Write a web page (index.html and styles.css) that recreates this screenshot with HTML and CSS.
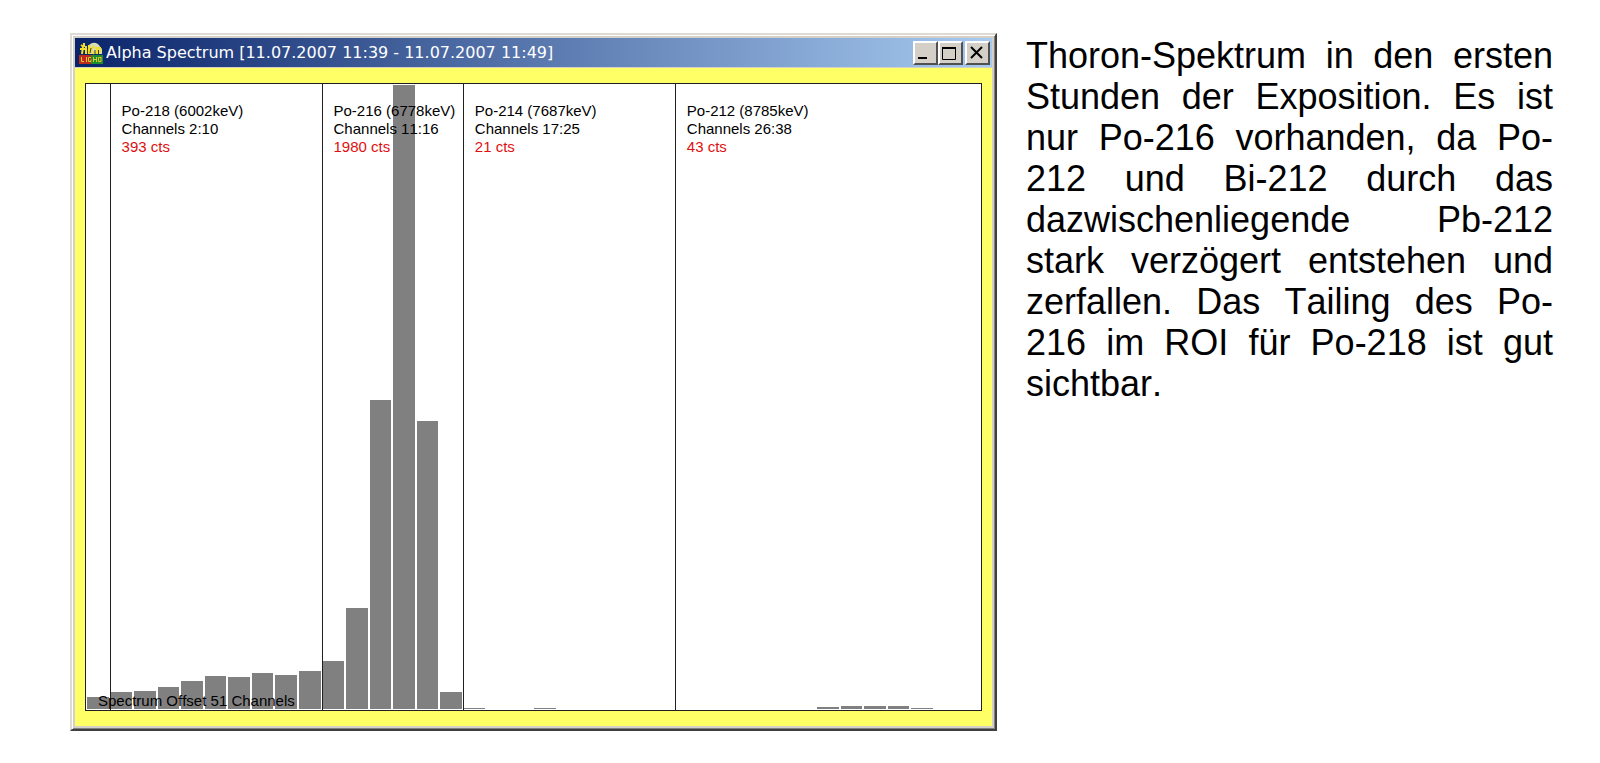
FILE: index.html
```
<!DOCTYPE html>
<html lang="de">
<head>
  <meta charset="UTF-8">
  <meta name="viewport" content="width=device-width, initial-scale=1.0">
  <title>Alpha Spectrum</title>
  <link rel="stylesheet" href="styles.css">
</head>
<body>
  <main class="slide">
    <section class="window">
      <header class="title-bar">
        <svg class="app-icon" viewBox="0 0 24 22" aria-hidden="true">
          <path d="M10 3Q14 -1 19 2L23 7V12H10Z" fill="#d8dcb8"/>
          <path d="M2 3L5 5M5 1V5M1 7H8M4 5L3 12M7 4V12M10 3V12M11 8L15 4M12 8L15 12M18 6V12M16 6H22M21 7V11" fill="none" stroke="#f2df28" stroke-width="2"/>
          <path d="M8.5 7V12M12 6L11 11M16 8V12M19.5 8V12" fill="none" stroke="#3d4218" stroke-width="1"/>
          <rect x="0" y="13" width="12" height="9" fill="#c02a1c"/>
          <rect x="12" y="13" width="12" height="9" fill="#218c2c"/>
          <path d="M2.5 15V19.5H5M7.5 15V20M12 15.5H9.5V19.5H12V17.5M14.5 15V20M14 17.5H17M17.5 15V20M22 15.5H19.5V19.5H22V15" fill="none" stroke="#dfc92c" stroke-width="1"/>
        </svg>
        <h1 class="title">Alpha Spectrum [11.07.2007 11:39 - 11.07.2007 11:49]</h1>
        <div class="window-buttons">
          <button type="button" aria-label="Minimize">
            <svg viewBox="0 0 20 19"><path d="M3 15H12" stroke="#000" stroke-width="2"/></svg>
          </button>
          <button type="button" aria-label="Maximize">
            <svg viewBox="0 0 20 19"><path d="M2 5H16" stroke="#000" stroke-width="2"/><path d="M2.5 4V16.5H15.5V4" fill="none" stroke="#000"/></svg>
          </button>
          <button type="button" class="close" aria-label="Close">
            <svg viewBox="0 0 20 19"><path d="M4 4L15 15M15 4L4 15" stroke="#000" stroke-width="2"/></svg>
          </button>
        </div>
      </header>
      <div class="client">
        <div class="plot">
          <div class="bars"></div>
          <div class="regions">
            <div class="region"></div>
            <div class="region">
              <p>Po-218 (6002keV)</p>
              <p>Channels 2:10</p>
              <p class="counts">393 cts</p>
            </div>
            <div class="region">
              <p>Po-216 (6778keV)</p>
              <p>Channels 11:16</p>
              <p class="counts">1980 cts</p>
            </div>
            <div class="region">
              <p>Po-214 (7687keV)</p>
              <p>Channels 17:25</p>
              <p class="counts">21 cts</p>
            </div>
            <div class="region">
              <p>Po-212 (8785keV)</p>
              <p>Channels 26:38</p>
              <p class="counts">43 cts</p>
            </div>
          </div>
          <p class="offset">Spectrum Offset 51 Channels</p>
        </div>
      </div>
    </section>

    <p class="description">Thoron-Spektrum in den ersten Stunden der Exposition. Es ist nur Po-216 vorhanden, da Po-212 und Bi-212 durch das dazwischenliegende Pb-212 stark verzögert entstehen und zerfallen. Das Tailing des Po-216 im ROI für Po-218 ist gut sichtbar.</p>
  </main>

  <script>
    const bars = document.querySelector('.bars');

    // channels 1 to 38, relative to the peak channel
    const fullScale = 625;
    const channels = [
      12, 17, 18, 22, 28, 33, 32, 36, 34, 38,
      48, 101, 310, 625, 289, 17,
      1, 0, 0, 1, 0, 0, 0, 0, 0,
      0, 0, 0, 0, 0, 0, 2, 3, 3, 3, 1, 0, 0
    ];

    channels.forEach(value => {
      const bar = document.createElement('div');
      bar.className = 'bar';
      bar.style.height = (value / fullScale * 100) + '%';
      bars.appendChild(bar);
    });
  </script>
</body>
</html>
```
FILE: styles.css
```
* {
  box-sizing: border-box;
}
body {
  margin: 0;
  background: #fff;
  color: #000;
  font-family: "Liberation Sans", Arial, sans-serif;
  font-kerning: none;
}
p {
  margin: 0;
}
.slide {
  display: grid;
  grid-template-columns: 927fr 527fr;
  gap: 29px;
  align-items: start;
  padding: 33px 47px 32px 70px;
}

/* window frame */
.window {
  background: #d4d0c8;
  border: 2px solid;
  border-color: #dedbd4 #404040 #404040 #dedbd4;
  box-shadow: inset 1px 1px #fff, inset -1px -1px #808080;
  padding: 3px;
}
.title-bar {
  display: flex;
  align-items: center;
  height: 29px;
  padding: 0 2px 0 4px;
  background: linear-gradient(to right, #0a246a, #a6caf0);
}
.app-icon {
  width: 24px;
  height: 22px;
  margin-right: 3px;
}
.title {
  flex: 1;
  margin: 0;
  color: #fff;
  font-family: "DejaVu Sans", Verdana, sans-serif;
  font-size: 16px;
  font-weight: normal;
  white-space: nowrap;
}
.window-buttons {
  display: flex;
}
.window-buttons button {
  width: 25px;
  height: 24px;
  padding: 0;
  background: #d4d0c8;
  border: 2px solid;
  border-color: #fff #505050 #505050 #fff;
}
.window-buttons .close {
  margin-left: 2px;
}
.window-buttons svg {
  display: block;
  width: 20px;
  height: 19px;
}

/* spectrum */
.client {
  margin-top: 1px;
  padding: 15px 10px;
  background: #ffff66;
}
.plot {
  display: grid;
  aspect-ratio: 898 / 629;
  border: 1px solid #202020;
  background: #fff;
}
.bars,
.regions,
.offset {
  grid-area: 1 / 1;
  min-height: 0;
}
.bars {
  display: grid;
  grid-template-columns: repeat(38, 1fr);
  column-gap: 2px;
  align-items: end;
  padding: 1px;
}
.bar {
  background: #808080;
}
.regions {
  display: grid;
  grid-template-columns: 1fr 9fr 6fr 9fr 13fr;
}
.region {
  min-width: 0;
  padding: 18px 0 0 11px;
  font-size: 15px;
  line-height: 18px;
  white-space: nowrap;
}
.region + .region {
  border-left: 1px solid #202020;
}
.counts {
  color: #e01010;
}
.offset {
  align-self: end;
  padding-left: 12px;
  font-size: 15px;
  line-height: 18px;
}

.description {
  padding-top: 2px;
  font-size: 36px;
  line-height: 41px;
  text-align: justify;
}
```
